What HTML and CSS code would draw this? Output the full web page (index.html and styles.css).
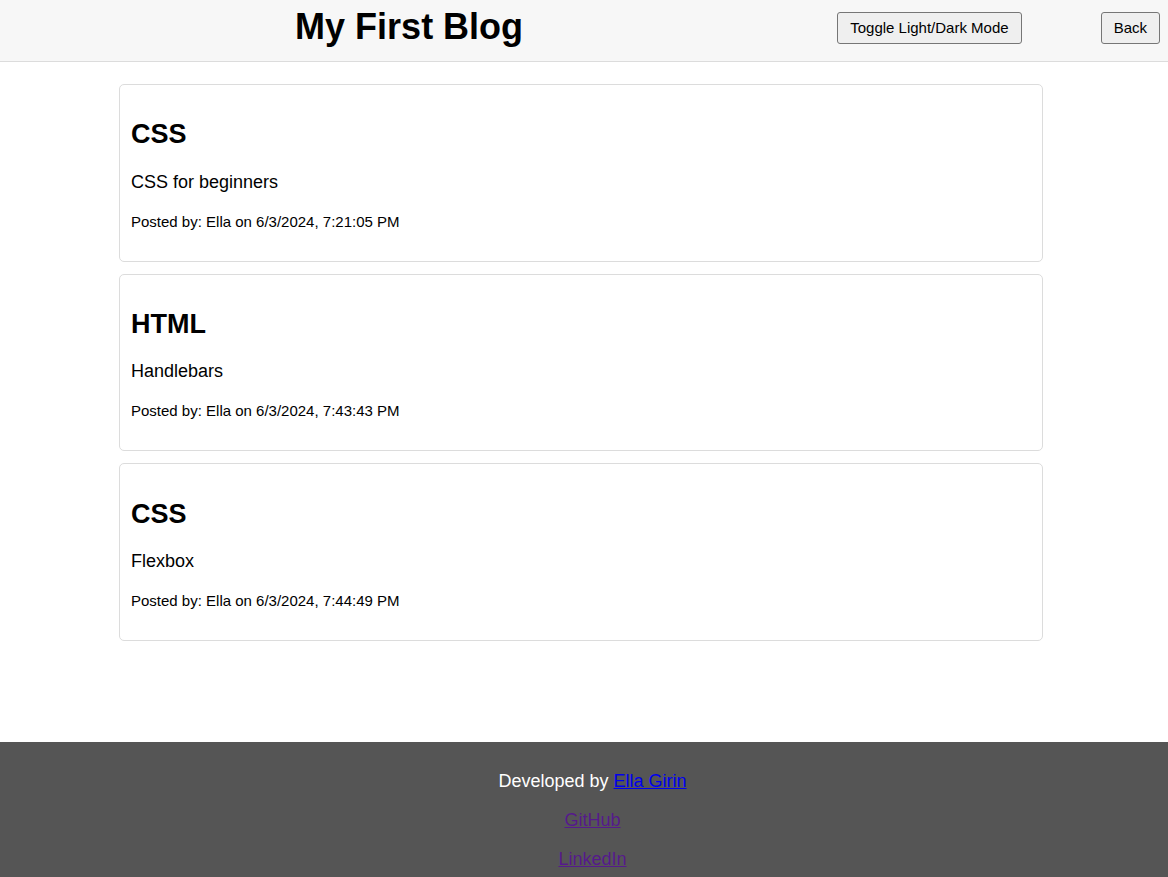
FILE: index.html
```html
<!DOCTYPE html>
<html lang="en">
<head>
<meta charset="utf-8">
<title>My First Blog</title>
<link rel="stylesheet" href="styles.css">
</head>
<body>
<header class="site-header">
  <h1 class="site-title">My First Blog</h1>
  <button class="btn btn-toggle" type="button">Toggle Light/Dark Mode</button>
  <button class="btn btn-back" type="button">Back</button>
</header>
<main class="posts">
  <article class="post">
    <h2 class="post-title">CSS</h2>
    <p class="post-body">CSS for beginners</p>
    <p class="post-meta"><small>Posted by: Ella on 6/3/2024, 7:21:05 PM</small></p>
  </article>
  <article class="post">
    <h2 class="post-title">HTML</h2>
    <p class="post-body">Handlebars</p>
    <p class="post-meta"><small>Posted by: Ella on 6/3/2024, 7:43:43 PM</small></p>
  </article>
  <article class="post">
    <h2 class="post-title">CSS</h2>
    <p class="post-body">Flexbox</p>
    <p class="post-meta"><small>Posted by: Ella on 6/3/2024, 7:44:49 PM</small></p>
  </article>
</main>
<footer class="site-footer">
  <p class="footer-line">Developed by <a class="link-new" href="#">Ella Girin</a></p>
  <p class="footer-line"><a class="link-visited" href="#">GitHub</a></p>
  <p class="footer-line"><a class="link-visited" href="#">LinkedIn</a></p>
</footer>
</body>
</html>
```

FILE: styles.css
```css
html, body {
  margin: 0;
  padding: 0;
}

body {
  font-family: "Liberation Sans", Arial, sans-serif;
  font-size: 18px;
  color: #000;
  background: #fff;
}

.site-header {
  display: flex;
  align-items: center;
  padding: 6px 8px 13px 0;
  background: #f7f7f7;
  border-bottom: 1px solid #dcdcdc;
}

.site-title {
  flex: 1;
  margin: 0 2px 0 0;
  font-size: 36px;
  font-weight: bold;
  text-align: center;
}

.btn {
  font-family: "Liberation Sans", Arial, sans-serif;
  font-size: 15px;
  color: #000;
  background: #efefef;
  border: 1px solid #767676;
  border-radius: 3px;
  padding: 6px 12px 7px;
  margin-top: 2px;
  line-height: normal;
}

.btn-toggle {
  margin-left: 17px;
}

.btn-back {
  margin-left: 79px;
}

.posts {
  width: 924px;
  margin-left: 119px;
  padding: 22px 0 101px;
  display: flex;
  flex-direction: column;
  gap: 11.8px;
}

.post {
  border: 1px solid #dcdcdc;
  border-radius: 5px;
  padding: 12px 10px 11px 11px;
}

.post-title {
  font-size: 27px;
  font-weight: bold;
  margin: 22.4px 0 21.4px;
}

.post-body {
  margin: 18px 0;
}

.post-meta {
  margin: 18px 0;
}

.site-footer {
  background: #555;
  color: #fff;
  text-align: center;
  padding: 11px 0 10px 17px;
}

.footer-line {
  margin: 18px 0;
}

.link-new {
  color: #0000ee;
}

.link-visited {
  color: #551a8b;
}
```
